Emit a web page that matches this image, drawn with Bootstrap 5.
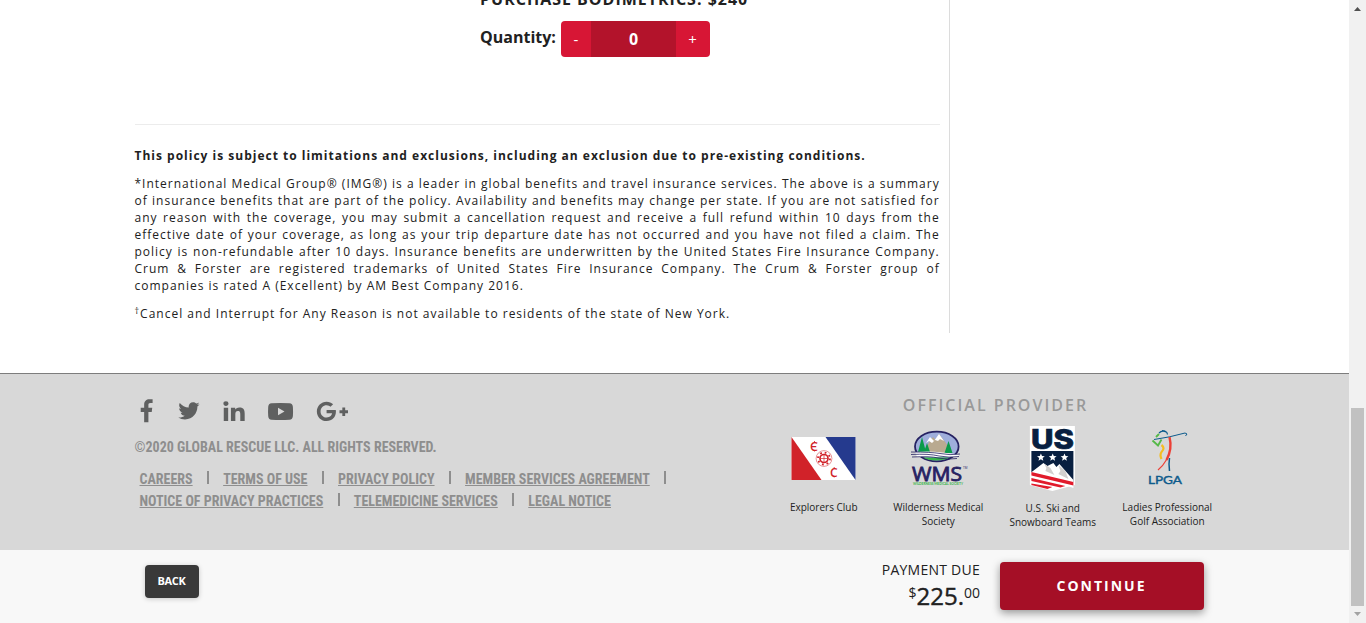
<!DOCTYPE html>
<html lang="en">
<head>
<meta charset="utf-8">
<meta name="viewport" content="width=device-width, initial-scale=1">
<title>Global Rescue</title>
<link href="https://cdn.jsdelivr.net/npm/bootstrap@5.3.0/dist/css/bootstrap.min.css" rel="stylesheet">
<script src="https://cdn.jsdelivr.net/npm/bootstrap@5.3.0/dist/js/bootstrap.bundle.min.js" defer></script>
<style>
body{font-family:"Open Sans",sans-serif;color:#212121;background:#fff;height:623px}
a{color:inherit}
.policy-pane{width:950px;height:333px;padding:0 9.3px 0 134.5px;border-right:1px solid #dcdcdc}
.main-area{height:373px;display:flow-root}
.order{padding-left:345.5px;height:124px;display:flow-root}
.buy-title{font-size:16px;font-weight:700;letter-spacing:1px;line-height:22px;margin-top:-12px;height:33px;white-space:nowrap;margin-bottom:-4px}
.qty-label{font-size:16px;font-weight:700;line-height:24px;margin:4px 5px 0 0;width:76px}
.stepper{width:149px;height:36px;border-radius:4px;background:#d71635;color:#fff;line-height:36px;font-size:16px;text-align:center}
.stepper .step{width:30px;font-size:15px;line-height:37px;background:transparent;border:0;color:#fff;padding:0}
.stepper .plus{width:34px;padding-right:1px}
.stepper .amount{background:#b3132b;font-weight:700}
.qty-row{margin-top:4px}
.rule{border-top:1px solid #ececec;height:23px}
.policy{font-size:12px;line-height:17px;letter-spacing:1px;text-align:justify}
.policy p{margin-bottom:11px}
.policy sup{font-size:9px;line-height:0;letter-spacing:1px;top:-.5em}
.foot{height:177px;background:#d8d8d8;border-top:1px solid #7d7d7d;padding-left:134.5px}
.foot-left{width:655px;padding-top:24px;font-family:"Roboto Condensed","Roboto",sans-serif;font-stretch:condensed;font-weight:700;color:#8e8e8e}
.social{height:28px;margin-left:5.5px;fill:#5f6060}
.copy{font-size:14px;line-height:20px;margin-top:11px}
.links{font-size:14px;line-height:22px;padding-left:5px;margin-top:11px}
.links span.bar{width:2px;height:13px;background:#8e8e8e;margin:3px 14.25px 0}
.providers{width:460px;margin-left:-23px;padding-top:19px}
.providers h2{font-size:16px;font-weight:600;letter-spacing:2px;line-height:24px;color:#999;margin:0 2px 8px 0}
.provider{width:114.5px;font-size:10px;line-height:14px;color:#222}
.provider svg{display:block;margin:0 auto 9px}
.bottom{height:73px;background:#f8f8f8;padding:12px 145px 0}
.back{width:54px;height:33px;margin-top:3px;background:#393939;color:#fff;font-size:11px;font-weight:700;letter-spacing:-.3px;border-radius:4px;padding:0 1px 0 0;box-shadow:0 1px 5px #0003}
.due{font-size:14px;line-height:16px;margin-right:20px;letter-spacing:.25px}
.sum{font-size:24px;font-weight:500;line-height:35px;letter-spacing:0;-webkit-text-stroke:.4px #212121}
.cents{font-size:14px;font-weight:400;line-height:30px;-webkit-text-stroke:0}
.go{width:204px;height:48px;border-radius:4px;background:#a50f26;color:#fff;font-size:14px;font-weight:700;letter-spacing:2px;padding:0 1px 2px 0;box-shadow:0 3px 8px #0006}
.track{width:17px;background:#f1f1f1}
.thumb{width:13px;height:198px;background:#c1c1c1;margin:408px auto 0}
</style>
</head>
<body class="d-flex overflow-hidden">
<div class="flex-grow-1 overflow-hidden">
  <main class="main-area">
    <div class="policy-pane">
      <div class="order">
        <div class="buy-title">PURCHASE BODIMETRICS: $240</div>
        <div class="d-flex qty-row">
          <div class="qty-label">Quantity:</div>
          <div class="stepper d-flex overflow-hidden">
            <button class="step">-</button><div class="amount flex-grow-1">0</div><button class="step plus">+</button>
          </div>
        </div>
      </div>
      <div class="rule"></div>
      <div class="policy">
        <p class="fw-bold">This policy is subject to limitations and exclusions, including an exclusion due to pre-existing conditions.</p>
        <p>*International Medical Group® (IMG®) is a leader in global benefits and travel insurance services. The above is a summary of insurance benefits that are part of the policy. Availability and benefits may change per state. If you are not satisfied for any reason with the coverage, you may submit a cancellation request and receive a full refund within 10 days from the effective date of your coverage, as long as your trip departure date has not occurred and you have not filed a claim. The policy is non-refundable after 10 days. Insurance benefits are underwritten by the United States Fire Insurance Company. Crum &amp; Forster are registered trademarks of United States Fire Insurance Company. The Crum &amp; Forster group of companies is rated A (Excellent) by AM Best Company 2016.</p>
        <p><sup>†</sup>Cancel and Interrupt for Any Reason is not available to residents of the state of New York.</p>
      </div>
    </div>
  </main>
  <footer class="foot d-flex">
    <div class="foot-left flex-shrink-0">
      <svg class="social d-block" width="215" height="28" viewBox="0 0 215 28">
        <g transform="translate(.7 1.2) scale(.0451)"><path d="M76.7 512V283H0v-91h76.7v-71.7C76.7 42.4 124.3 0 193.8 0c33.3 0 61.9 2.5 70.2 3.6V85h-48.2c-37.8 0-45.1 18-45.1 44.3V192H256l-11.7 91h-73.6v229"/></g>
        <g transform="translate(38.3 2.2) scale(.0415)"><path d="M459.37 151.716c.325 4.548.325 9.097.325 13.645 0 138.72-105.583 298.558-298.558 298.558-59.452 0-114.68-17.219-161.137-47.106 8.447.974 16.568 1.299 25.34 1.299 49.055 0 94.213-16.568 130.274-44.832-46.132-.975-84.792-31.188-98.112-72.772 6.498.974 12.995 1.624 19.818 1.624 9.421 0 18.843-1.3 27.614-3.573-48.081-9.747-84.143-51.98-84.143-102.985v-1.299c13.969 7.797 30.214 12.67 47.431 13.319-28.264-18.843-46.781-51.005-46.781-87.391 0-19.492 5.197-37.36 14.294-52.954 51.655 63.675 129.3 105.258 216.365 109.807-1.624-7.797-2.599-15.918-2.599-24.04 0-57.828 46.782-104.934 104.934-104.934 30.213 0 57.502 12.67 76.67 33.137 23.715-4.548 46.456-13.32 66.599-25.34-7.798 24.366-24.366 44.833-46.132 57.827 21.117-2.273 41.584-8.122 60.426-16.243-14.292 20.791-32.161 39.308-52.628 54.253z"/></g>
        <g transform="translate(83.4 3.2) scale(.0475 .0442)"><path d="M100.3 448H7.4V148.9h92.9zM53.8 108.1C24.1 108.1 0 83.5 0 53.8a53.8 53.8 0 0 1 107.6 0c0 29.7-24.1 54.3-53.8 54.3zM448 448h-92.7V302.4c0-34.7-.7-79.2-48.3-79.2-48.3 0-55.7 37.7-55.7 76.7V448h-92.8V148.9h89.1v40.8h1.3c12.4-23.5 42.7-48.3 87.9-48.3 94 0 111.3 61.9 111.3 142.3V448z"/></g>
        <path fill-rule="evenodd" d="M131.5 5.2Q140.500 4.600 149.500 5.200Q152.700 5.500 152.900 9Q153.200 13.500 152.900 18Q152.600 21.500 149.500 21.800Q140.500 22.400 131.500 21.800Q128.400 21.500 128.200 18Q127.900 13.500 128.200 9Q128.400 5.500 131.500 5.200zM138 9.800v7.400l6.500-3.700z"/>
        <g transform="translate(176.200 .400) scale(.0507)"><path d="M386.061 228.496c1.834 9.692 3.143 19.384 3.143 31.956C389.204 370.205 315.599 448 204.800 448c-106.084 0-192-85.915-192-192s85.916-192 192-192c51.864 0 95.083 18.859 128.611 50.292l-52.126 50.030c-14.145-13.621-39.028-29.599-76.485-29.599-65.484 0-118.920 54.221-118.920 121.277 0 67.056 53.436 121.277 118.920 121.277 75.961 0 104.513-54.745 108.965-82.773H204.800v-66.009h181.261zm185.406 6.437V179.200h-56.001v55.733h-55.733v56.001h55.733v55.733h56.001v-55.733H627.200v-56.001h-55.733z"/></g>
      </svg>
      <div class="copy">©2020 GLOBAL RESCUE LLC. ALL RIGHTS RESERVED.</div>
      <div class="links">
        <div class="d-flex"><a href="#">CAREERS</a><span class="bar"></span><a href="#">TERMS OF USE</a><span class="bar"></span><a href="#">PRIVACY POLICY</a><span class="bar"></span><a href="#">MEMBER SERVICES AGREEMENT</a><span class="bar"></span></div>
        <div class="d-flex"><a href="#">NOTICE OF PRIVACY PRACTICES</a><span class="bar"></span><a href="#">TELEMEDICINE SERVICES</a><span class="bar"></span><a href="#">LEGAL NOTICE</a></div>
      </div>
    </div>
    <div class="providers flex-shrink-0">
      <h2 class="text-center">OFFICIAL PROVIDER</h2>
      <div class="d-flex text-center">
        <div class="provider"><svg width="66" height="66" viewBox="0 0 66 66">
          <path fill="#fff" d="M.500 12h64v43H.500z"/><path fill="#d12229" d="M.500 12v43h30z"/><path fill="#253a8e" d="M34.500 12h30v43z"/>
          <g fill="none" stroke="#d12229"><circle cx="33" cy="33.500" r="7.900" stroke-width=".7" opacity=".7"/><circle cx="33" cy="33.500" r="4" stroke-width="1.700"/><circle cx="33" cy="33.500" r="6" stroke-width="1.800" stroke-dasharray="1.800 2.910"/><path stroke-width=".7" d="M33 30v7M29.500 33.500h7"/></g>
          <g fill="#d12229" font-family="Open Sans" font-weight="600" font-size="12" text-anchor="middle"><text x="23" y="25.500">Є</text><text x="42.700" y="51.500">C</text></g>
          <path stroke="#d12229" stroke-width=".8" d="M23.500 16v1.500M23.500 25v1.500M43.200 42v1.500M43.200 51v1.500"/></svg>Explorers Club</div>
        <div class="provider"><svg width="66" height="66" viewBox="0 0 66 66">
          <ellipse cx="31.800" cy="21.500" rx="21.800" ry="14.800" fill="#9faedb" stroke="#262262" stroke-width="1.800"/>
          <path fill="#b9aa90" d="M20 26l4-9 4-5 3 3 3-6 7 9 5 9-5 4H22z"/><path fill="#fff" d="M21 18l4-6 4 4 5-7 5 7-4-2-2 2-3-1-3 3-3-2z"/>
          <path fill="#0a9b4a" d="M17 12l4 15h-8zM22 18l3 9h-6zM43.500 16l4 12h-8z"/>
          <path fill="#fff" d="M10 27q20-2 44 3l-2 2H12z"/><path fill="#39b54a" d="M18 32.500h27q-6 3-14 3-8 0-13-3"/>
          <g fill="none" stroke="#262262" stroke-width=".8"><path d="M6 27q20 0 29 1.500 10 2 20 .5M6 29.500q18-1 28 1.500 10 2 20 .5M7 32q19-1 26 1 10 2 19 .5"/></g>
          <text x="7" y="56" font-family="Open Sans" font-weight="400" font-size="19.500" textLength="50" lengthAdjust="spacingAndGlyphs" fill="#262262" stroke="#262262" stroke-width=".8">WMS</text><text x="58" y="44" font-size="3" fill="#262262">TM</text>
          <text x="8" y="59.500" font-family="Lato" font-weight="700" font-size="2.800" textLength="50" lengthAdjust="spacingAndGlyphs" fill="#39b54a">WILDERNESS MEDICAL SOCIETY</text></svg>Wilderness Medical<br>Society</div>
        <div class="provider"><svg width="66" height="67" viewBox="-.4 0 66 67">
          <path fill="#fff" d="M9.500 1h45v59L32 66 9.500 60z"/>
          <text x="10.500" y="24" font-family="Inter,'Open Sans'" font-weight="800" font-size="27" stroke="#081f40" stroke-width=".7" textLength="43" lengthAdjust="spacingAndGlyphs" fill="#081f40">US</text>
          <path fill="#081f40" d="M11 26h42v31l-42-10z"/>
          <path fill="#fff" id="st" d="M20.500 28.600l1.100 2.500 2.800.2-2.200 1.800.7 2.700-2.400-1.500-2.400 1.500.7-2.700-2.200-1.800 2.800-.2z"/><use href="#st" x="11.800"/><use href="#st" x="23.600"/>
          <path fill="#fff" d="M10 48l13-10 4 3 6-3 3 4 3-3 14 16v8z"/><path fill="#d2d0cf" d="M24 39l2 4-1 3 9 4-4-7zM38 40l2 6-2 3 10 5-3-8z"/>
          <path fill="#e11b2c" d="M11 47l42 10v3.500L11 50.500zM11 53l34 8-5 1.500L11 56zM11 58.500L32 62l-5 2-16-4z" /></svg>U.S. Ski and<br>Snowboard Teams</div>
        <div class="provider"><svg width="66" height="66" viewBox="0 0 66 66" fill="none">
          <path stroke="#0d5b8c" stroke-width="1" d="M20 14.500q15-2 31-6.500l2 1-1.500 2"/><path stroke="#0d5b8c" stroke-width="1.200" d="M25 8q3-3 7-1M28 5.500q5 0 5.500 4"/><path stroke="#0d5b8c" stroke-width="1.500" d="M35.500 33q-1 6 0 13"/>
          <path stroke="#55b948" stroke-width="1.800" d="M18.500 15.500l5.500 5 3.500-6M22 12l3-3"/>
          <path stroke="#f5bd20" stroke-width="2.200" d="M27.500 20q4 3 0 7-2 3 0 7"/>
          <path stroke="#ec4036" stroke-width="2.400" d="M35.500 12q3 12-3 23"/><path stroke="#ec4036" stroke-width="1.200" d="M33 34q-4 7-9 11"/>
          <text x="14" y="59" font-family="Lato" font-size="11" textLength="34" lengthAdjust="spacingAndGlyphs" fill="#0d5b8c" stroke="#0d5b8c" stroke-width=".4">LPGA</text></svg>Ladies Professional<br>Golf Association</div>
      </div>
    </div>
  </footer>
  <div class="bottom d-flex">
    <button class="btn back me-auto">BACK</button>
    <div class="due text-end">PAYMENT DUE<div class="sum d-flex justify-content-end"><span class="cents">$</span>225.<span class="cents">00</span></div></div>
    <button class="btn go">CONTINUE</button>
  </div>
</div>
<div class="track flex-shrink-0 h-100 d-flex">
  <svg class="position-absolute" width="17" height="623"><path fill="#505050" d="M5 11h7L8.500 7z"/><path fill="#a3a3a3" d="M5 612h7l-3.500 4z"/></svg>
  <div class="thumb"></div>
</div>
</body>
</html>
